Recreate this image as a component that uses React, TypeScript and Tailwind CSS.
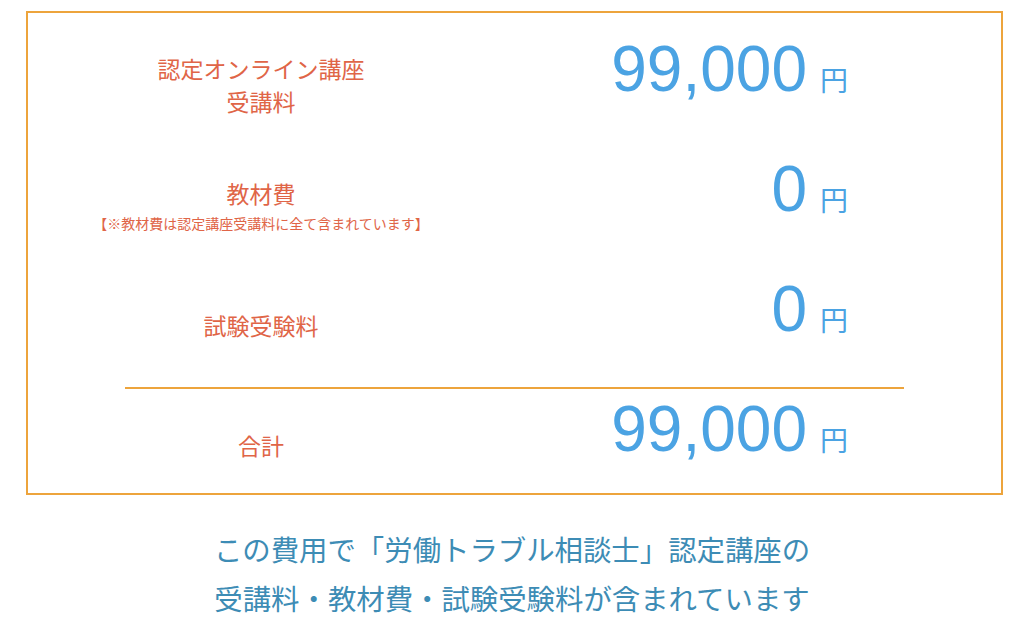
const jp = { fontFamily: '"Noto Sans CJK JP", "Noto Sans", sans-serif' };
const num = { fontFamily: '"Liberation Sans", Arial, sans-serif' };

function Price({ value }: { value: string }) {
  return (
    <div className="mb-[32px] flex flex-1 items-baseline justify-end pr-[153px] text-[#4ba3e3]">
      <span style={num} className="text-[64px] leading-none">
        {value}
      </span>
      <span style={jp} className="ml-[13px] text-[28px] leading-none">
        円
      </span>
    </div>
  );
}

export default function App() {
  return (
    <div className="bg-white pt-[11px]" style={jp}>
      <div className="ml-[26px] w-[977px] border-[2.5px] border-[#eda43c] pt-[12px]">
        <div className="flex h-[120px] items-center">
          <div className="w-[466px] text-center text-[23px] leading-[33px] text-[#e06547]">
            <p>認定オンライン講座</p>
            <p>受講料</p>
          </div>
          <Price value="99,000" />
        </div>

        <div className="flex h-[120px] items-center">
          <div className="w-[466px] text-center text-[#e06547]">
            <p className="text-[23px] leading-[33px]">教材費</p>
            <p className="mt-[3px] text-[14px] leading-[20px]">
              【※教材費は認定講座受講料に全て含まれています】
            </p>
          </div>
          <Price value="0" />
        </div>

        <div className="flex h-[120px] items-center">
          <div className="w-[466px] text-center text-[23px] leading-[33px] text-[#e06547]">
            <p>試験受験料</p>
          </div>
          <Price value="0" />
        </div>

        <div className="mx-[97px] mt-[2px] h-[2px] bg-[#eda43c]" />

        <div className="flex h-[104px] items-center pt-[8px]">
          <div className="w-[466px] text-center text-[23px] leading-[33px] text-[#e06547]">
            <p>合計</p>
          </div>
          <Price value="99,000" />
        </div>
      </div>

      <div className="pt-[29px] text-center text-[28.4px] leading-[49px] text-[#3d8cb5]">
        <p>この費用で「労働トラブル相談士」認定講座の</p>
        <p>受講料・教材費・試験受験料が含まれています</p>
      </div>
    </div>
  );
}
